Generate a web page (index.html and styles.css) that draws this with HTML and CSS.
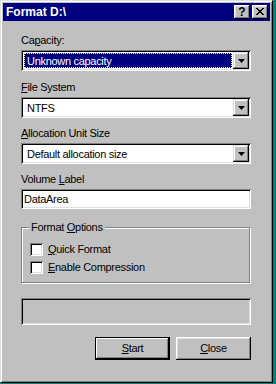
FILE: index.html
```html
<!DOCTYPE html>
<html>
<head>
<meta charset="utf-8">
<title>Format D:\</title>
<link rel="stylesheet" href="styles.css">
</head>
<body>
<div class="desk">
  <div class="window">
    <div class="titlebar">
      <span class="title">Format D:\</span>
      <div class="caps">
        <span class="capbtn help">?</span>
        <span class="capbtn">
          <svg width="8" height="7" viewBox="0 0 8 7"><path d="M0 0h2v1h1v1h2V1h1V0h2v1H7v1H6v1H5v1h1v1h1v1h1v1H6V6H5V5H3v1H2v1H0V6h1V5h1V4h1V3H2V2H1V1H0z" fill="#000"/></svg>
        </span>
      </div>
    </div>
    <div class="client">
      <div class="field first">
        <div class="label">Ca<u>p</u>acity:</div>
        <div class="combo">
          <div class="combo-val focused"><span>Unknown capacity</span></div>
          <div class="drop"><svg width="7" height="4" viewBox="0 0 7 4"><path d="M0 0h7L3.5 4z" fill="#000"/></svg></div>
        </div>
      </div>
      <div class="field">
        <div class="label"><u>F</u>ile System</div>
        <div class="combo">
          <div class="combo-val"><span>NTFS</span></div>
          <div class="drop"><svg width="7" height="4" viewBox="0 0 7 4"><path d="M0 0h7L3.5 4z" fill="#000"/></svg></div>
        </div>
      </div>
      <div class="field">
        <div class="label"><u>A</u>llocation Unit Size</div>
        <div class="combo">
          <div class="combo-val"><span>Default allocation size</span></div>
          <div class="drop"><svg width="7" height="4" viewBox="0 0 7 4"><path d="M0 0h7L3.5 4z" fill="#000"/></svg></div>
        </div>
      </div>
      <div class="field">
        <div class="label">Volume <u>L</u>abel</div>
        <div class="edit">DataArea</div>
      </div>
      <div class="group">
        <span class="legend">Format <u>O</u>ptions</span>
        <div class="check-row"><span class="checkbox"></span><span><u>Q</u>uick Format</span></div>
        <div class="check-row"><span class="checkbox"></span><span><u>E</u>nable Compression</span></div>
      </div>
      <div class="progress"></div>
      <div class="buttons">
        <div class="btn default"><u>S</u>tart</div>
        <div class="btn"><u>C</u>lose</div>
      </div>
    </div>
  </div>
</div>
</body>
</html>
```

FILE: styles.css
```css
* { box-sizing: border-box; }
html, body { margin: 0; padding: 0; }
body {
  background: #008080;
  font-family: "Liberation Sans", Arial, sans-serif;
  font-size: 11px;
  letter-spacing: -0.3px;
  color: #000;
  width: 276px;
  height: 384px;
  overflow: hidden;
}
u { text-decoration: underline; text-underline-offset: 1px; }
.desk { width: 276px; height: 384px; overflow: hidden; }
.window {
  width: 273px;
  height: 383px;
  background: #c0c0c0;
  border: 1px solid;
  border-color: #dfdfdf #000 #000 #dfdfdf;
  box-shadow: inset 1px 1px #fff, inset -1px -1px #808080;
  padding: 2px;
  display: flex;
  flex-direction: column;
}
.titlebar {
  height: 18px;
  background: #000080;
  display: flex;
  align-items: center;
  justify-content: space-between;
  padding: 0 2px 0 3px;
}
.title {
  color: #fff;
  font-weight: bold;
  font-size: 12px;
  letter-spacing: 0;
}
.caps { display: flex; gap: 2px; }
.capbtn {
  width: 16px;
  height: 14px;
  background: #c0c0c0;
  box-shadow: inset -1px -1px #000, inset 1px 1px #fff, inset -2px -2px #808080, inset 2px 2px #dfdfdf;
  display: flex;
  align-items: center;
  justify-content: center;
  padding-bottom: 1px;
}
.help {
  font-weight: bold;
  font-size: 12px;
  line-height: 12px;
  letter-spacing: 0;
}
.client {
  padding: 13px 19px 0 18px;
  display: flex;
  flex-direction: column;
}
.field { display: flex; flex-direction: column; margin-bottom: 9px; }
.field.first { margin-bottom: 10px; }
.label { height: 13px; line-height: 13px; margin-bottom: 3px; }
.combo {
  height: 21px;
  background: #fff;
  box-shadow: inset 1px 1px #808080, inset -1px -1px #fff, inset 2px 2px #000, inset -2px -2px #dfdfdf;
  padding: 2px;
  display: flex;
}
.combo-val {
  flex: 1;
  margin: 1px;
  padding-left: 2px;
  display: flex;
  align-items: center;
  border: 1px solid transparent;
  white-space: nowrap;
}
.combo-val.focused {
  background: #000080;
  color: #fff;
  border: 1px dotted #ffff80;
}
.drop {
  width: 16px;
  height: 17px;
  background: #c0c0c0;
  box-shadow: inset -1px -1px #000, inset 1px 1px #dfdfdf, inset -2px -2px #808080, inset 2px 2px #fff;
  display: flex;
  align-items: center;
  justify-content: center;
}
.drop svg { display: block; }
.edit {
  height: 20px;
  background: #fff;
  box-shadow: inset 1px 1px #808080, inset -1px -1px #fff, inset 2px 2px #000, inset -2px -2px #dfdfdf;
  padding: 0 3px;
  line-height: 20px;
}
.group {
  position: relative;
  margin-top: 9px;
  width: 229px;
  border: 1px solid #808080;
  box-shadow: inset 1px 1px #fff, 1px 1px #fff;
  padding: 15px 8px 8px 8px;
  display: flex;
  flex-direction: column;
  gap: 5px;
}
.legend {
  position: absolute;
  top: -7px;
  left: 7px;
  padding: 0 2px;
  background: #c0c0c0;
  line-height: 13px;
}
.check-row { display: flex; align-items: center; height: 13px; line-height: 13px; }
.checkbox {
  width: 13px;
  height: 13px;
  background: #fff;
  box-shadow: inset 1px 1px #808080, inset -1px -1px #fff, inset 2px 2px #000, inset -2px -2px #dfdfdf;
  margin-right: 5px;
  flex: none;
}
.progress {
  margin-top: 15px;
  height: 27px;
  box-shadow: inset 1px 1px #808080, inset -1px -1px #fff, inset 2px 2px #000, inset -2px -2px #dfdfdf;
}
.buttons {
  margin-top: 12px;
  display: flex;
  justify-content: flex-end;
  gap: 6px;
}
.btn {
  width: 75px;
  height: 23px;
  background: #c0c0c0;
  box-shadow: inset -1px -1px #000, inset 1px 1px #fff, inset -2px -2px #808080, inset 2px 2px #dfdfdf;
  display: flex;
  align-items: center;
  justify-content: center;
  line-height: 13px;
}
.btn.default {
  border: 1px solid #000;
  box-shadow: inset -1px -1px #000, inset 1px 1px #fff, inset -2px -2px #808080;
}
```
